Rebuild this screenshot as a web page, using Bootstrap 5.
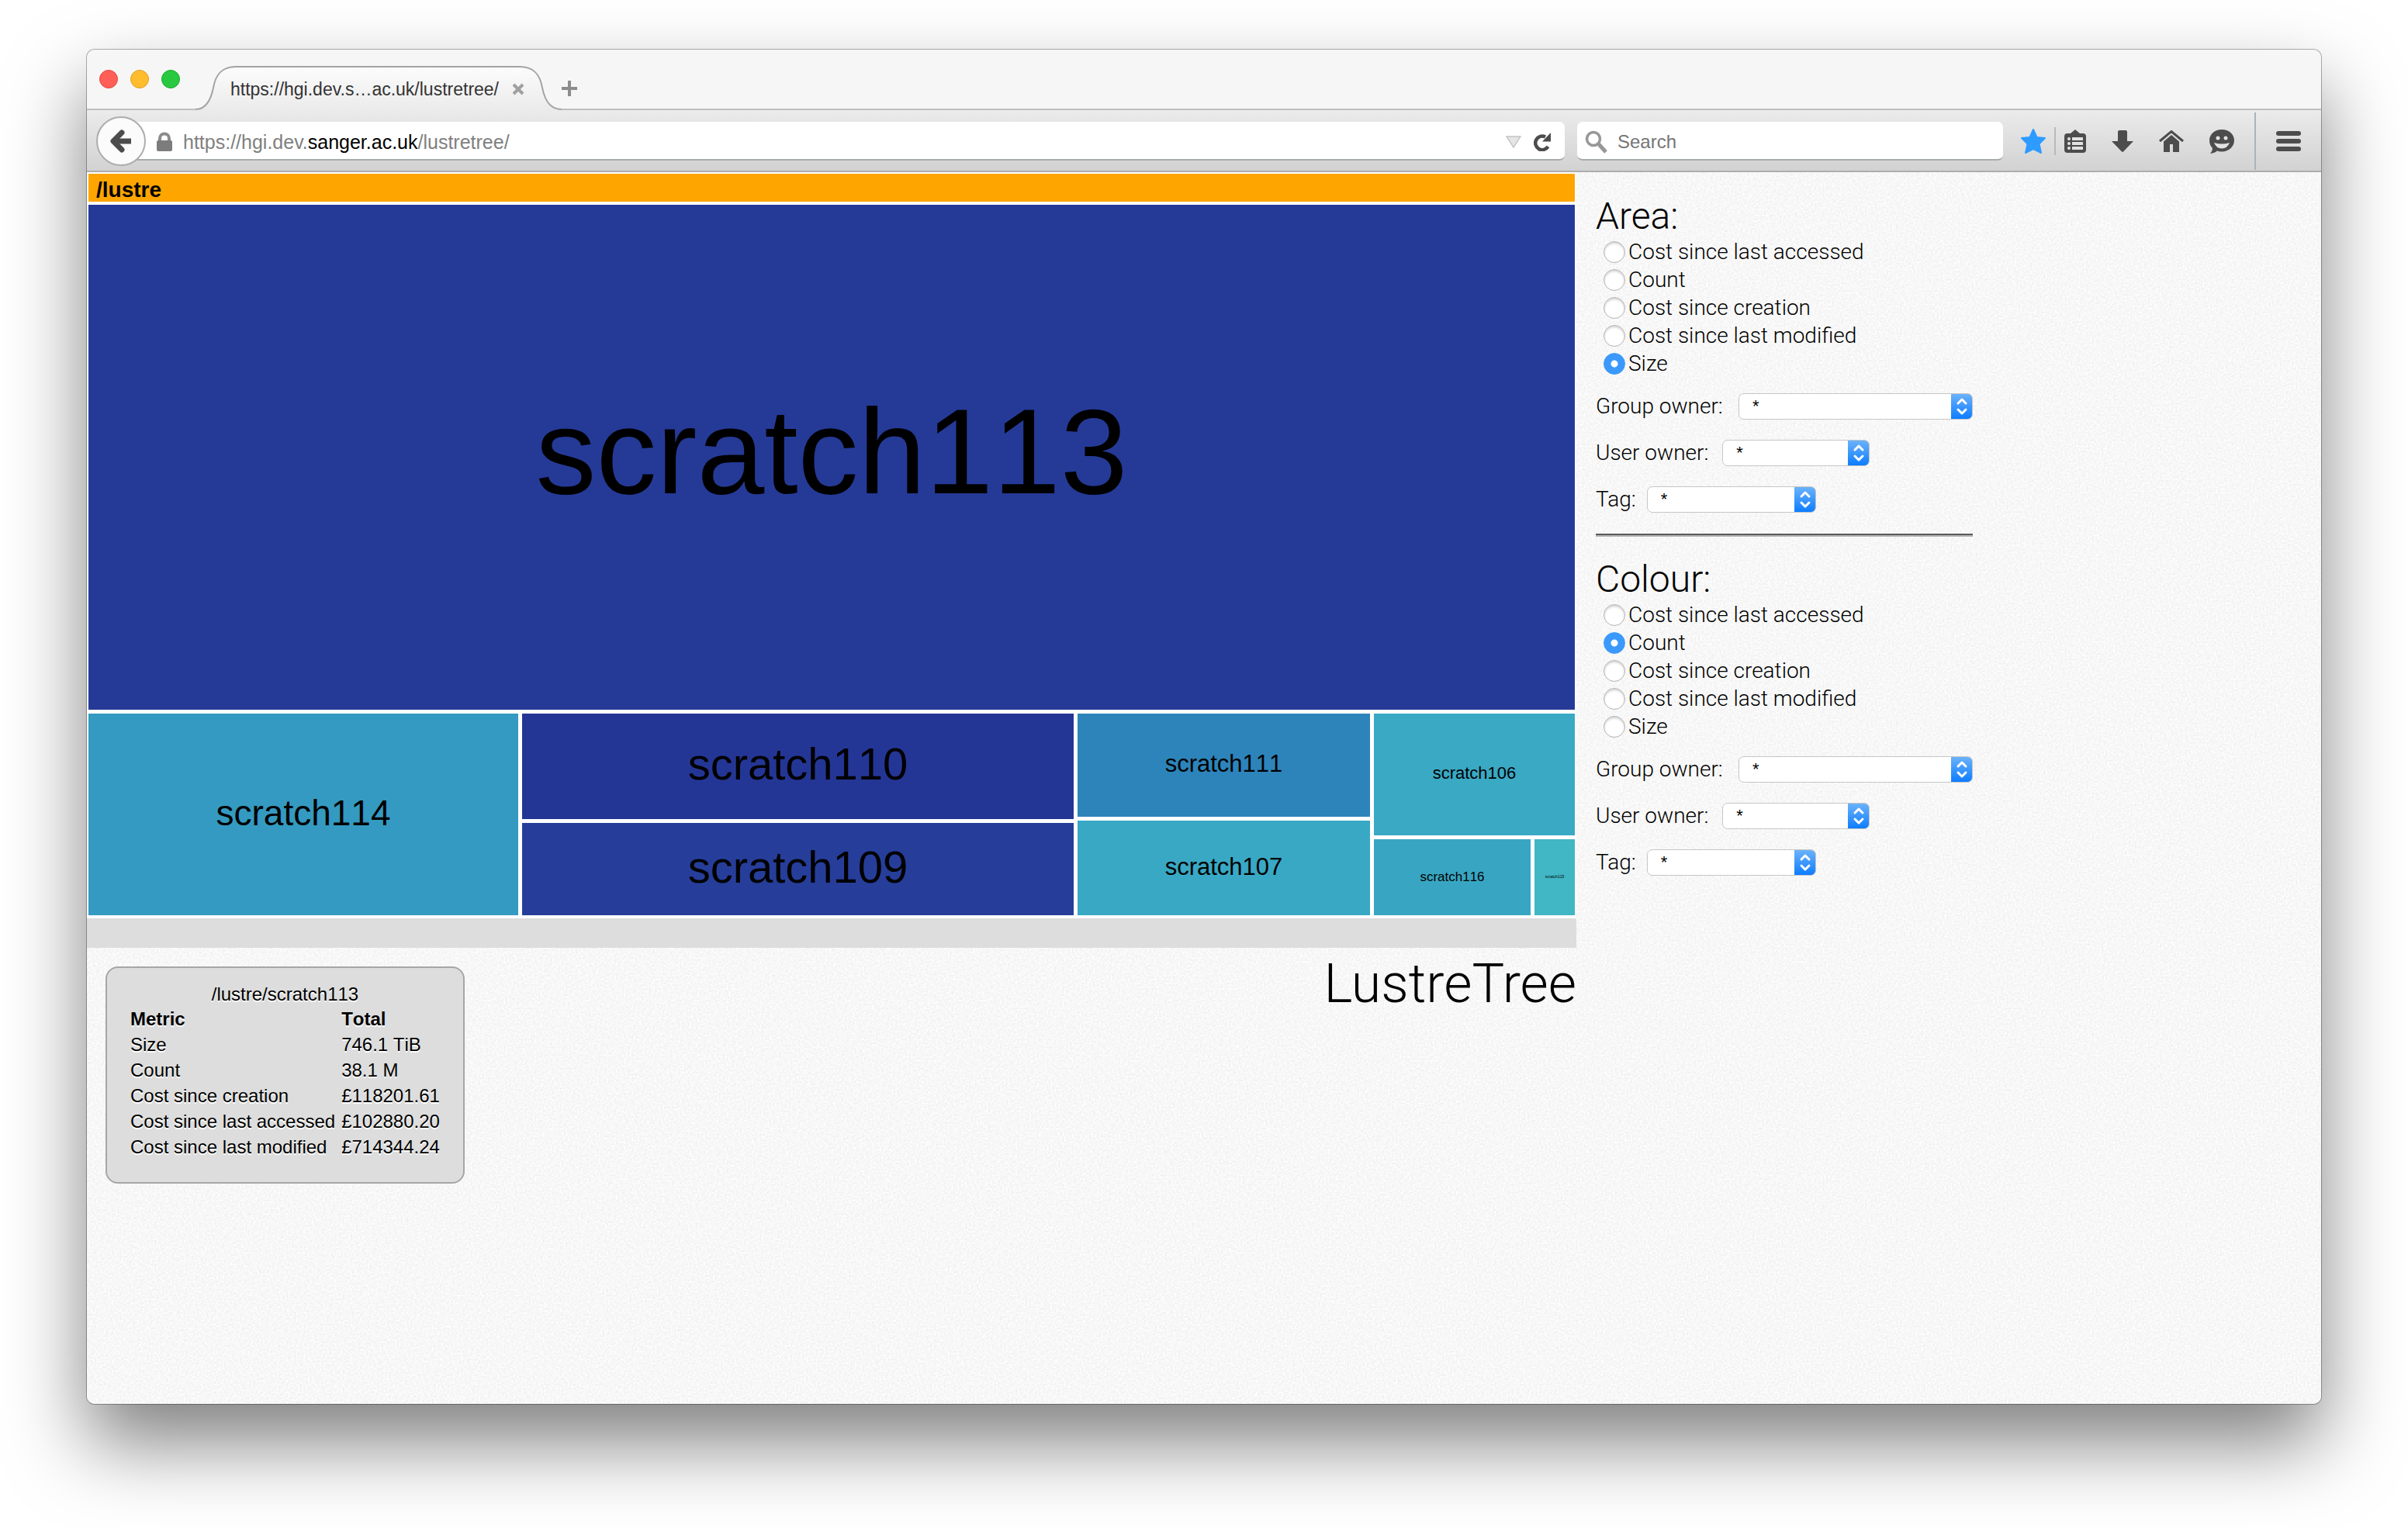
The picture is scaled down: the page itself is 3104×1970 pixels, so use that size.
<!DOCTYPE html>
<html lang="en">
<head>
<meta charset="utf-8">
<meta name="viewport" content="width=device-width, initial-scale=1">
<title>LustreTree</title>
<link href="https://cdn.jsdelivr.net/npm/bootstrap@5.3.0/dist/css/bootstrap.min.css" rel="stylesheet">
<style>
  body { font-family: "Liberation Sans", Arial, sans-serif; color: #000; background: #fff; }
  svg { display: block; flex: none; }
  button { border: 0; background: none; padding: 0; color: inherit; }

  .app-window { margin: 64px 112px 160px; min-height: calc(100vh - 224px); border-radius: 10px; background: #f7f7f7;
    box-shadow: 0 0 0 1px rgba(0,0,0,.3), 0 50px 100px rgba(0,0,0,.5); }

  /* title bar */
  .title-bar { height: 78px; padding: 0 16px; background: #f6f6f6; border-bottom: 2px solid #bfbfbf; border-radius: 10px 10px 0 0; }
  .light { width: 24px; height: 24px; border-radius: 50%; border: 1px solid; }
  .light-close { background: #ff5f57; border-color: #e2463f; }
  .light-min { background: #ffbd2e; border-color: #e0a023; }
  .light-max { background: #28c940; border-color: #1aab29; }
  .lights { height: 76px; gap: 16px; }
  .tab-item { position: relative; width: 472px; height: 58px; margin: 0 0 -2px 20px; padding: 4px 48px 0 45px; font-size: 23px; color: #333; }
  .tab-shape { position: absolute; inset: 0; z-index: 0; }
  .tab-item > a, .tab-item > button { position: relative; z-index: 1; color: inherit; }

  /* navigation tool bar */
  .tool-bar { height: 80px; padding: 2px 26px 0 12px; background: linear-gradient(#ebebeb, #d2d2d2); border-bottom: 2px solid #adadad; }
  .back-btn { position: relative; z-index: 2; width: 64px; height: 64px; border-radius: 50%; border: 2px solid #adadad; background: #fbfbfb; }
  .field-box { height: 50px; background: #fff; border-bottom: 2px solid #a8abab; border-radius: 7px; }
  .url-box { flex: 1 1 auto; margin-left: -32px; padding: 4px 18px 0 40px; border-radius: 0 7px 7px 0; }
  .url-text { font-size: 25px; line-height: 30px; color: #808080; text-decoration: none; margin-left: 8px; }
  .url-text b { font-weight: 400; color: #000; }
  .search-box { width: 549px; margin-left: 16px; padding: 4px 10px 0; }
  .search-box input { border: 0; outline: 0; background: none; font-size: 24px; width: 400px; margin-left: 12px; padding: 0; color: #000; }
  .search-box input::placeholder { color: #757575; opacity: 1; }
  .tool-icons { margin-left: 23px; color: #4c4c4c; }
  .icon-group { gap: 33px; }
  .icon-pair { gap: 11px; }
  .sep { width: 2px; background: #b9b9b9; height: 36px; }
  .sep-tall { height: 74px; background: #aab2bb; margin: 0 26px; }

  /* page */
  .page-area { position: relative; }
  .noise { position: absolute; inset: 0; width: 100%; height: 100%; border-radius: 0 0 10px 10px; }
  .page-grid { position: relative; }

  .treemap { background: #fff; padding: 2px 2px 4px; display: flex; flex-direction: column; gap: 4px; font-kerning: none; }
  .crumb { height: 36px; background: #ffa500; font-size: 28px; line-height: 30px; font-weight: 700; padding: 6px 0 0 10px; text-align: left; }
  .tiles { display: flex; gap: 5px; height: 916px; flex-direction: column; }
  .tiles .split { display: flex; gap: 5px; min-width: 0; min-height: 0; flex-basis: 0; }
  .tile { display: flex; align-items: center; justify-content: center; flex-basis: 0; min-width: 0; min-height: 0; line-height: 1; color: #000; }
  .tile span { padding-bottom: .1em; }
  .t-156 { font-size: 156px; } .t-58 { font-size: 58px; } .t-46 { font-size: 46px; } .t-31 { font-size: 31px; }
  .t-22 { font-size: 22px; } .t-17 { font-size: 17px; } .t-5 { font-size: 5px; }
  .status-strip { height: 38px; background: #ddd; }

  .metric-box { margin: 24px 0 0 24px; padding: 18px 30px 18px 30px; background: #ddd; border: 2px solid #a6a6a6; border-radius: 16px; text-shadow: 0 2px 0 #fff; font-size: 24px; height: 280px; }
  .metric-box table { line-height: 33px; font-kerning: none; }
  .metric-box caption { caption-side: top; padding: 0; color: #000; text-align: center; line-height: 32px; }
  .metric-box thead { line-height: 32px; }
  .metric-box th, .metric-box td { padding: 0 8px 0 0; }
  .metric-box th + th, .metric-box td + td { padding-right: 0; }
  .brand-name { font-family: Roboto, "Liberation Sans", sans-serif; font-weight: 300; font-size: 70px; line-height: 80px; margin: 6px 0 0; }

  .options { padding: 29px 0 0 25px; font-family: Roboto, "Liberation Sans", sans-serif; font-weight: 300; font-size: 28px; }
  .options-inner { width: 486px; }
  .options legend { font-size: 48px; line-height: 56px; margin: 0; font-weight: 300; float: none; }
  .choice { height: 36px; padding-left: 10px; gap: 4px; }
  .choice input { appearance: none; width: 28px; height: 28px; margin: 0; border-radius: 50%; border: 1px solid #b4b4b4; background: #fff; box-shadow: inset 0 2px 3px rgba(0,0,0,.18); }
  .choice input:checked { border-color: #3b99fc; background: radial-gradient(circle, #fff 0 4px, #3b99fc 5px); box-shadow: none; }
  .pick-rows { display: flex; flex-direction: column; gap: 26px; padding-top: 20px; }
  .pick-row { height: 34px; gap: 14px; line-height: 34px; white-space: nowrap; }
  .pick-row select { appearance: none; height: 34px; border: 1px solid #c6c6c6; border-radius: 7px; padding: 0 34px 0 17px; font: 22px/30px "Liberation Sans", Arial, sans-serif; color: #000;
    background: url("data:image/svg+xml,%3Csvg xmlns='http://www.w3.org/2000/svg' width='28' height='34' fill='none' stroke='white' stroke-width='3' stroke-linecap='round' stroke-linejoin='round'%3E%3Cpath d='M9 13l5-5 5 5M9 21l5 5 5-5'/%3E%3C/svg%3E") right center / 28px 34px no-repeat border-box, linear-gradient(#6eb4fb, #0a7bff) right center / 28px 34px no-repeat border-box, #fff; }
  .pick-group { flex: none; width: 302px; margin-left: auto; } .pick-user { width: 190px; margin-left: 4px; } .pick-tag { width: 218px; }
  .rule { height: 4px; margin: 27px 0 27px; border: 0; background: linear-gradient(#5a5a5a 50%, #b4b4b4 50%); opacity: 1; }
</style>
<script src="https://cdn.jsdelivr.net/npm/bootstrap@5.3.0/dist/js/bootstrap.bundle.min.js"></script>
</head>
<body>
<div class="app-window d-flex flex-column">
  <header class="title-bar d-flex align-items-end">
    <div class="lights d-flex align-items-center">
      <button class="light light-close" aria-label="Close"></button>
      <button class="light light-min" aria-label="Minimise"></button>
      <button class="light light-max" aria-label="Zoom"></button>
    </div>
    <div class="tab-item d-flex align-items-center justify-content-between">
      <svg class="tab-shape" width="472" height="58" viewBox="0 0 472 58">
        <defs><linearGradient id="tabfill" x1="0" y1="0" x2="0" y2="1"><stop offset="0" stop-color="#fcfcfc"/><stop offset="1" stop-color="#ebebeb"/></linearGradient></defs>
        <path d="M0 58V57C14 57 20 44 23 29C26 12 34 2 52 2H418C436 2 444 12 447 29C450 44 456 57 472 57V58Z" fill="url(#tabfill)"/>
        <path d="M0 57C14 57 20 44 23 29C26 12 34 2 52 2H418C436 2 444 12 447 29C450 44 456 57 472 57" fill="none" stroke="#a3a3a3" stroke-width="2"/>
      </svg>
      <a href="#" class="text-decoration-none text-nowrap">https://hgi.dev.s…ac.uk/lustretree/</a>
      <button aria-label="Close tab"><svg width="16" height="16" viewBox="0 0 16 16" stroke="#a0a0a0" stroke-width="4"><path d="M2 2L14 14M14 2L2 14"/></svg></button>
    </div>
    <button class="mb-3" aria-label="New tab"><svg width="20" height="20" viewBox="0 0 20 20" stroke="#8c8c8c" stroke-width="4"><path d="M10 0V20M0 10H20"/></svg></button>
  </header>

  <nav class="tool-bar d-flex align-items-center" aria-label="Navigation">
    <button class="back-btn d-flex align-items-center justify-content-center" aria-label="Back"><svg width="30" height="32" viewBox="0 0 30 32" fill="none" stroke="#4c4c4c" stroke-width="7" stroke-linejoin="round"><path d="M16 5L5 16L16 27" stroke-linecap="round"/><path d="M7 16H28"/></svg></button>
    <div class="field-box url-box d-flex align-items-center">
      <svg width="32" height="26" viewBox="0 0 32 26"><path d="M10 12V8.500a6 6 0 0 1 12 0V12" fill="none" stroke="#8c8c8c" stroke-width="4"/><rect x="6" y="11" width="20" height="14" rx="2" fill="#7c7c7c"/></svg>
      <a class="url-text text-nowrap me-auto" href="#">https://hgi.dev.<b>sanger.ac.uk</b>/lustretree/</a>
      <button class="me-3" aria-label="History"><svg width="20" height="16" viewBox="0 0 20 16"><path d="M1 1H19L10 15Z" fill="#e6e6e6" stroke="#c4c4c4" stroke-width="1.500"/></svg></button>
      <button aria-label="Reload"><svg width="22" height="24" viewBox="0 0 22 24"><path d="M18.500 18A8.800 8.800 0 1 1 15 5.500" fill="none" stroke="#4c4c4c" stroke-width="4.500"/><path d="M22 0V11.500H11Z" fill="#4c4c4c"/></svg></button>
    </div>
    <div class="field-box search-box d-flex align-items-center">
      <svg width="30" height="30" viewBox="0 0 30 30" fill="none" stroke="#979797"><circle cx="11" cy="11" r="8.500" stroke-width="3.500"/><path d="M17 17L27 28" stroke-width="5"/></svg>
      <input type="text" placeholder="Search" aria-label="Search">
    </div>
    <div class="tool-icons d-flex align-items-center flex-shrink-0">
      <div class="icon-group d-flex align-items-center">
        <div class="icon-pair d-flex align-items-center">
          <button aria-label="Bookmark"><svg width="32" height="32" viewBox="0 0 32 32"><path d="M16 1L20.500 11L31 12L23.500 19.500L26 31L16 26L6 31L8.500 19.500L1 12L11.500 11Z" fill="#2d9bff" stroke="#2d9bff" stroke-width="2" stroke-linejoin="round"/></svg></button>
          <span class="sep"></span>
          <button aria-label="Bookmarks list"><svg width="28" height="30" viewBox="0 0 28 30"><path d="M4 5H8L14 0L20 5H24a4 4 0 0 1 4 4V26a4 4 0 0 1-4 4H4a4 4 0 0 1-4-4V9a4 4 0 0 1 4-4Z" fill="currentColor"/><g fill="#e2e2e2"><circle cx="6" cy="12" r="2"/><circle cx="6" cy="18" r="2"/><circle cx="6" cy="24" r="2"/><rect x="10" y="10" width="14" height="4"/><rect x="10" y="16" width="14" height="4"/><rect x="10" y="22" width="14" height="4"/></g></svg></button>
        </div>
        <button aria-label="Downloads"><svg width="28" height="28" viewBox="0 0 28 28"><path d="M10 0H18a2 2 0 0 1 2 2V14H28L15 27.500Q14 28.300 13 27.500L0 14H8V2a2 2 0 0 1 2-2Z" fill="currentColor"/></svg></button>
        <button aria-label="Home"><svg width="32" height="28" viewBox="0 0 32 28"><path d="M1 14L16 1.500L31 14" fill="none" stroke="currentColor" stroke-width="3"/><path d="M16 6L26 14.500V28H18V18H14V28H6V14.500Z" fill="currentColor"/></svg></button>
        <button aria-label="Chat"><svg width="32" height="31" viewBox="0 0 32 31"><path d="M16 0C25 0 32 6 32 14S25 28.500 16 28.500Q12.500 28.500 10 27.500Q7 30 1 31Q4 28 4 24Q0 20 0 14C0 6 7 0 16 0Z" fill="currentColor"/><circle cx="11" cy="11" r="2.500" fill="#e2e2e2"/><circle cx="21" cy="11" r="2.500" fill="#e2e2e2"/><path d="M6 17Q16 20 26 17Q23 24.500 16 24.500T6 17Z" fill="#e2e2e2"/></svg></button>
      </div>
      <span class="sep sep-tall"></span>
      <button aria-label="Menu"><svg width="32" height="26" viewBox="0 0 32 26" fill="currentColor"><rect width="32" height="6" rx="3"/><rect y="10" width="32" height="6" rx="3"/><rect y="20" width="32" height="6" rx="3"/></svg></button>
    </div>
  </nav>

  <main class="page-area flex-grow-1">
    <svg class="noise" aria-hidden="true">
      <filter id="grain" x="0" y="0" width="100%" height="100%" color-interpolation-filters="sRGB"><feTurbulence type="fractalNoise" baseFrequency=".4" numOctaves="2" seed="4"/><feColorMatrix values=".1 0 0 0 .92  .1 0 0 0 .92  .1 0 0 0 .92  0 0 0 0 1"/></filter>
      <rect width="100%" height="100%" filter="url(#grain)"/>
    </svg>
    <div class="page-grid row g-0">
      <div class="col-8">
        <div class="treemap">
          <button class="crumb">/lustre</button>
          <div class="tiles">
            <div class="tile t-156" style="flex-grow:651;background:#253a97"><span>scratch113</span></div>
            <div class="split" style="flex-grow:260">
              <div class="tile t-46" style="flex-grow:554;background:#349ac1"><span>scratch114</span></div>
              <div class="split flex-column" style="flex-grow:711">
                <div class="tile t-58" style="flex-grow:136;background:#243695"><span>scratch110</span></div>
                <div class="tile t-58" style="flex-grow:119;background:#263e9a"><span>scratch109</span></div>
              </div>
              <div class="split flex-column" style="flex-grow:377">
                <div class="tile t-31" style="flex-grow:133;background:#2d84ba"><span>scratch111</span></div>
                <div class="tile t-31" style="flex-grow:122;background:#39a8c4"><span>scratch107</span></div>
              </div>
              <div class="split flex-column" style="flex-grow:259">
                <div class="tile t-22" style="flex-grow:157;background:#39a9c4"><span>scratch106</span></div>
                <div class="split" style="flex-grow:98">
                  <div class="tile t-17" style="flex-grow:202;background:#38a6c3"><span>scratch116</span></div>
                  <div class="tile t-5" style="flex-grow:52;background:#41b6c4"><span>scratch115</span></div>
                </div>
              </div>
            </div>
          </div>
        </div>
        <div class="status-strip"></div>
        <div class="d-flex justify-content-between align-items-start">
          <section class="metric-box">
            <table>
              <caption>/lustre/scratch113</caption>
              <thead><tr><th>Metric</th><th>Total</th></tr></thead>
              <tbody>
                <tr><td>Size</td><td>746.1 TiB</td></tr>
                <tr><td>Count</td><td>38.1 M</td></tr>
                <tr><td>Cost since creation</td><td>£118201.61</td></tr>
                <tr><td>Cost since last accessed</td><td>£102880.20</td></tr>
                <tr><td>Cost since last modified</td><td>£714344.24</td></tr>
              </tbody>
            </table>
          </section>
          <h1 class="brand-name">LustreTree</h1>
        </div>
      </div>
      <aside class="col-4 options">
        <form class="options-inner">
          <fieldset>
            <legend>Area:</legend>
            <div class="choice d-flex align-items-center"><input type="radio" name="area" id="a1"><label for="a1">Cost since last accessed</label></div>
            <div class="choice d-flex align-items-center"><input type="radio" name="area" id="a2"><label for="a2">Count</label></div>
            <div class="choice d-flex align-items-center"><input type="radio" name="area" id="a3"><label for="a3">Cost since creation</label></div>
            <div class="choice d-flex align-items-center"><input type="radio" name="area" id="a4"><label for="a4">Cost since last modified</label></div>
            <div class="choice d-flex align-items-center"><input type="radio" name="area" id="a5" checked><label for="a5">Size</label></div>
            <div class="pick-rows">
              <div class="pick-row d-flex"><label for="ag">Group owner:</label><select id="ag" class="pick-group"><option>*</option></select></div>
              <div class="pick-row d-flex"><label for="au">User owner:</label><select id="au" class="pick-user"><option>*</option></select></div>
              <div class="pick-row d-flex"><label for="at">Tag:</label><select id="at" class="pick-tag"><option>*</option></select></div>
            </div>
          </fieldset>
          <hr class="rule">
          <fieldset>
            <legend>Colour:</legend>
            <div class="choice d-flex align-items-center"><input type="radio" name="colour" id="c1"><label for="c1">Cost since last accessed</label></div>
            <div class="choice d-flex align-items-center"><input type="radio" name="colour" id="c2" checked><label for="c2">Count</label></div>
            <div class="choice d-flex align-items-center"><input type="radio" name="colour" id="c3"><label for="c3">Cost since creation</label></div>
            <div class="choice d-flex align-items-center"><input type="radio" name="colour" id="c4"><label for="c4">Cost since last modified</label></div>
            <div class="choice d-flex align-items-center"><input type="radio" name="colour" id="c5"><label for="c5">Size</label></div>
            <div class="pick-rows">
              <div class="pick-row d-flex"><label for="cg">Group owner:</label><select id="cg" class="pick-group"><option>*</option></select></div>
              <div class="pick-row d-flex"><label for="cu">User owner:</label><select id="cu" class="pick-user"><option>*</option></select></div>
              <div class="pick-row d-flex"><label for="ct">Tag:</label><select id="ct" class="pick-tag"><option>*</option></select></div>
            </div>
          </fieldset>
        </form>
      </aside>
    </div>
  </main>
</div>
</body>
</html>
